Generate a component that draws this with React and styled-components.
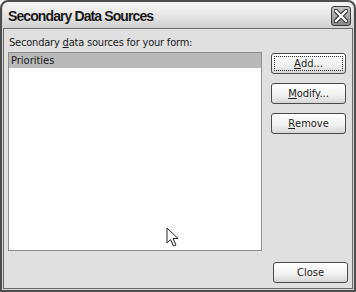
import styled, { createGlobalStyle } from "styled-components";

const GlobalStyle = createGlobalStyle`
  html, body {
    margin: 0;
    padding: 0;
    background: #ffffff;
  }
  body {
    font-family: "DejaVu Sans Condensed", Tahoma, "DejaVu Sans", sans-serif;
  }
`;

const App = () => {
  return (
    <>
      <GlobalStyle />
      <Window>
        <TitleBar>
          <Title>Secondary Data Sources</Title>
          <CloseBox aria-label="Close">
            <svg width="14" height="14" viewBox="0 0 14 14">
              <path
                d="M2 2 L12 12 M12 2 L2 12"
                stroke="#3a3a3a"
                strokeWidth="4.5"
                strokeLinecap="square"
              />
              <path
                d="M2 2 L12 12 M12 2 L2 12"
                stroke="#ffffff"
                strokeWidth="2.2"
                strokeLinecap="square"
              />
            </svg>
          </CloseBox>
        </TitleBar>
        <Body>
          <Label>
            Secondary <u>d</u>ata sources for your form:
          </Label>
          <Content>
            <ListBox>
              <ListItem selected>Priorities</ListItem>
              <Pointer width="14" height="21" viewBox="0 0 14 21">
                <path
                  d="M1 1 L1 16 L4.5 12.5 L7.5 19 L10 18 L7 11.5 L12 11.5 Z"
                  fill="#ffffff"
                  stroke="#222222"
                  strokeWidth="1"
                  strokeLinejoin="miter"
                />
              </Pointer>
            </ListBox>
            <ButtonColumn>
              <Button $default>
                <FocusRing>
                  <u>A</u>dd...
                </FocusRing>
              </Button>
              <Button>
                <u>M</u>odify...
              </Button>
              <Button>
                <u>R</u>emove
              </Button>
            </ButtonColumn>
          </Content>
          <Footer>
            <Button>Close</Button>
          </Footer>
        </Body>
      </Window>
    </>
  );
};

const Window = styled.div`
  width: 356px;
  height: 292px;
  box-sizing: border-box;
  border: 2px solid #4e4e4e;
  border-radius: 8px 8px 0 0;
  background: #d4d4d4;
  padding: 0 1px 1px 1px;
  display: flex;
  flex-direction: column;
`;

const TitleBar = styled.div`
  height: 26px;
  display: flex;
  align-items: center;
  justify-content: space-between;
  padding: 0 2px 0 5px;
  border-radius: 6px 6px 0 0;
  background: linear-gradient(
    to bottom,
    #f6f6f6 0%,
    #e8e8e8 45%,
    #d0d0d0 100%
  );
`;

const Title = styled.div`
  font-family: "Liberation Sans", Arial, sans-serif;
  font-weight: bold;
  font-size: 14px;
  letter-spacing: -0.9px;
  color: #1a1a1a;
  padding-top: 2px;
`;

const CloseBox = styled.div`
  width: 20px;
  height: 20px;
  box-sizing: border-box;
  border: 1px solid #3c3c3c;
  border-radius: 3px;
  background: linear-gradient(to bottom, #c4c4c4, #8a8a8a);
  display: flex;
  align-items: center;
  justify-content: center;
  margin-top: 2px;
`;

const Body = styled.div`
  flex: 1;
  border: 1px solid #6a6a6a;
  background: #e0e0e0;
  padding: 6px 4px 5px 4px;
  display: flex;
  flex-direction: column;
  font-size: 11px;
  color: #1a1a1a;
`;

const Label = styled.div`
  height: 17px;
  line-height: 15px;
  padding-left: 1px;
  letter-spacing: -0.2px;
`;

const Content = styled.div`
  display: flex;
  gap: 9px;
`;

const ListBox = styled.div`
  position: relative;
  width: 254px;
  height: 199px;
  box-sizing: border-box;
  border: 1px solid #8c8c8c;
  background: #ffffff;
`;

const ListItem = styled.div`
  height: 15px;
  line-height: 15px;
  padding-left: 2px;
  background: ${(props) => (props.selected ? "#b9b9b9" : "transparent")};
`;

const Pointer = styled.svg`
  position: absolute;
  left: 157px;
  top: 174px;
`;

const ButtonColumn = styled.div`
  display: flex;
  flex-direction: column;
  gap: 9px;
  padding-top: 1px;
`;

const Button = styled.div`
  width: 75px;
  height: 21px;
  box-sizing: border-box;
  border: 1px solid #4a4a4a;
  border-radius: 3px;
  background: linear-gradient(to bottom, #ffffff 0%, #f0f0f0 60%, #d6d6d6 100%);
  display: flex;
  align-items: center;
  justify-content: center;
  font-size: 11px;
  color: #1a1a1a;
  padding: ${(props) => (props.$default ? "2px" : "0")};
`;

const FocusRing = styled.div`
  flex: 1;
  align-self: stretch;
  border: 1px dotted #333333;
  display: flex;
  align-items: center;
  justify-content: center;
`;

const Footer = styled.div`
  margin-top: auto;
  display: flex;
  justify-content: flex-end;
`;

export default App;
